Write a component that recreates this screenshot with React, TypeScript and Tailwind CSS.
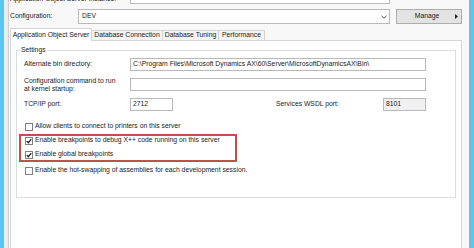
import type { ReactNode } from "react";

function Field({ value, className = "" }: { value?: string; className?: string }) {
  return (
    <div
      className={`h-[13px] border border-[#b9b9b9] bg-white px-[2px] flex items-center whitespace-nowrap overflow-hidden ${className}`}
    >
      {value}
    </div>
  );
}

function Check({ checked = false, label }: { checked?: boolean; label: string }) {
  return (
    <div className="flex items-center h-[9px] whitespace-nowrap">
      <span className="w-[8px] h-[8px] border border-[#808080] bg-white flex items-center justify-center shrink-0">
        {checked && (
          <svg width="6" height="6" viewBox="0 0 6 6">
            <path d="M0.7 3.1 L2.3 4.7 L5.3 1.1" stroke="#1f1f1f" strokeWidth="1.3" fill="none" />
          </svg>
        )}
      </span>
      <span className="ml-[2px]">{label}</span>
    </div>
  );
}

function Tab({ children, active = false, w }: { children: ReactNode; active?: boolean; w: string }) {
  if (active) {
    return (
      <div
        className={`${w} h-[13px] -mb-px relative z-10 bg-white border border-b-0 border-[#d4d4d4] flex items-center justify-center whitespace-nowrap`}
      >
        {children}
      </div>
    );
  }
  return (
    <div
      className={`${w} h-[10px] bg-[#f4f4f4] border-t border-r border-[#d4d4d4] flex items-center justify-center whitespace-nowrap`}
    >
      {children}
    </div>
  );
}

export default function App() {
  return (
    <div className="w-[474px] h-[248px] overflow-hidden flex font-['Liberation_Sans',Arial,sans-serif] text-[6.8px] text-[#1a1a1a]">
      {/* left window edge */}
      <div className="w-[4px] bg-[#5ac6ef]" />
      <div className="w-[4px] bg-[#ececec]" />
      <div className="w-px bg-[#cfcfcf]" />

      <div className="flex-1 bg-[#f8f8f8] pl-px pr-[7px] flex flex-col">
        {/* instance row, cut off at top */}
        <div className="flex h-[14px] -mt-[10px] shrink-0">
          <div className="w-[120px] pt-[5px] leading-[8px]">Application Object Server Instance:</div>
          <div className="w-[260px] h-[14px] border border-[#b9b9b9] bg-white" />
        </div>

        {/* configuration row */}
        <div className="flex items-center h-[15px] mt-[5px] shrink-0">
          <div className="w-[68px]">Configuration:</div>
          <div className="w-[312px] h-[15px] border border-[#b9b9b9] bg-white flex items-center pl-[3px] pr-[2px]">
            <span className="flex-1">DEV</span>
            <svg width="6" height="4" viewBox="0 0 6 4">
              <path d="M0.5 0.8 L3 3.2 L5.5 0.8" stroke="#444" strokeWidth="0.9" fill="none" />
            </svg>
          </div>
          <div className="w-[66px] h-[15px] ml-[6px] border border-[#adadad] bg-[#e3e3e3] flex items-center relative">
            <span className="flex-1 text-center pr-[4px]">Manage</span>
            <svg className="absolute right-[3px]" width="3" height="5" viewBox="0 0 3 5">
              <path d="M0 0 L3 2.5 L0 5 Z" fill="#222" />
            </svg>
          </div>
        </div>

        {/* tabs */}
        <div className="flex items-end mt-[4px] shrink-0">
          <Tab active w="w-[82px]">Application Object Server</Tab>
          <Tab w="w-[71px]">Database Connection</Tab>
          <Tab w="w-[56px]">Database Tuning</Tab>
          <Tab w="w-[46px]">Performance</Tab>
        </div>

        {/* tab page */}
        <div className="w-[452px] h-[220px] shrink-0 border border-[#d4d4d4] bg-white pt-[5px]">
          <fieldset className="ml-[5px] w-[440px] h-[152px] border border-[#dcdcdc] px-0 pb-0 pt-[4px]">
            <legend className="ml-[3px] px-px leading-[8px]">Settings</legend>

            <div className="flex items-center">
              <div className="w-[113px] pl-[7px]">Alternate bin directory:</div>
              <Field
                className="w-[296px]"
                value="C:\Program Files\Microsoft Dynamics AX\60\Server\MicrosoftDynamicsAX\Bin\"
              />
            </div>

            <div className="flex items-center mt-[6px]">
              <div className="w-[113px] pl-[7px] leading-[7.5px]">
                Configuration command to run
                <br />
                at kernel startup:
              </div>
              <Field className="w-[296px]" />
            </div>

            <div className="flex items-center mt-[6px]">
              <div className="w-[113px] pl-[7px]">TCP/IP port:</div>
              <Field className="w-[43px]" value="2712" />
              <div className="ml-[103px] w-[107px]">Services WSDL port:</div>
              <Field className="w-[43px] !bg-[#f0f0f0]" value="8101" />
            </div>

            <div className="pl-[8px] mt-[11px]">
              <Check label="Allow clients to connect to printers on this server" />
            </div>

            <div className="ml-[2px] mt-[3px] w-[218px] h-[28px] border-2 border-[#c0504d] pl-[4px]">
              <Check checked label="Enable breakpoints to debug X++ code running on this server" />
              <div className="mt-[5px]">
                <Check checked label="Enable global breakpoints" />
              </div>
            </div>

            <div className="pl-[8px] mt-[4px]">
              <Check label="Enable the hot-swapping of assemblies for each development session." />
            </div>
          </fieldset>
        </div>
      </div>

      {/* right window edge */}
      <div className="w-[5px] bg-[#5ac6ef]" />
    </div>
  );
}
